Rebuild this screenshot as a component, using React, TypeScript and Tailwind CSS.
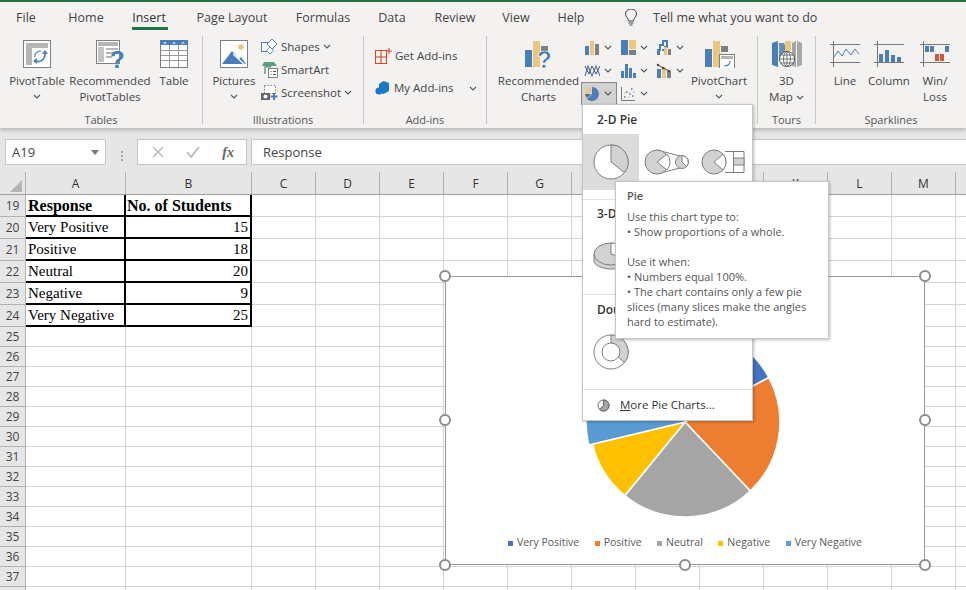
import type { ReactNode } from 'react'

const ui = "font-['Open_Sans',sans-serif]"
const BLUE = '#4a7ebb'
const TAN = '#eac67e'
const GRAY = '#7f7f7f'

const tabs = [
  { name: 'File', w: 'w-[52px]' },
  { name: 'Home', w: 'w-[68px]' },
  { name: 'Insert', w: 'w-[58px]', active: true },
  { name: 'Page Layout', w: 'w-[108px]' },
  { name: 'Formulas', w: 'w-[74px]' },
  { name: 'Data', w: 'w-[64px]' },
  { name: 'Review', w: 'w-[62px]' },
  { name: 'View', w: 'w-[60px]' },
  { name: 'Help', w: 'w-[50px]' },
]

const columns = [
  { name: 'A', w: 'w-[100px]' },
  { name: 'B', w: 'w-[126px]' },
  { name: 'C', w: 'w-[64px]' },
  { name: 'D', w: 'w-[64px]' },
  { name: 'E', w: 'w-[64px]' },
  { name: 'F', w: 'w-[64px]' },
  { name: 'G', w: 'w-[64px]' },
  { name: 'H', w: 'w-[64px]' },
  { name: 'I', w: 'w-[64px]' },
  { name: 'J', w: 'w-[64px]' },
  { name: 'K', w: 'w-[64px]' },
  { name: 'L', w: 'w-[64px]' },
  { name: 'M', w: 'w-[64px]' },
  { name: 'N', w: 'w-[64px]' },
]

const students = [
  { label: 'Very Positive', value: 15, color: '#4472c4', r: 95 },
  { label: 'Positive', value: 18, color: '#ed7d31', r: 95 },
  { label: 'Neutral', value: 20, color: '#a5a5a5', r: 95 },
  { label: 'Negative', value: 9, color: '#ffc000', r: 95 },
  { label: 'Very Negative', value: 25, color: '#5b9bd5', r: 99 },
]

const emptyRows = Array.from({ length: 14 }, (_, i) => 25 + i)

function Chevron({ className = '' }: { className?: string }) {
  return (
    <svg width="8" height="5" viewBox="0 0 8 5" className={className}>
      <path d="M1 1l3 3 3-3" fill="none" stroke="#555" strokeWidth="1.1" />
    </svg>
  )
}

function Icon({ children, w = 32, h = 28 }: { children: ReactNode; w?: number; h?: number }) {
  return (
    <svg width={w} height={h} viewBox={`0 0 ${w} ${h}`} className="shrink-0">
      {children}
    </svg>
  )
}

function PivotTableIcon() {
  return (
    <Icon>
      <rect x="2.5" y="0.5" width="27" height="27" fill="#fff" stroke={GRAY} />
      <rect x="5" y="3" width="22" height="5" fill="#b5b5b5" />
      <rect x="5" y="8" width="6" height="17" fill="#b5b5b5" />
      <path d="M14 21c5 2 10-1 10-8" fill="none" stroke={BLUE} strokeWidth="1.6" />
      <path d="M21 14l3-4 3 4zM16 18l-4 3 4 3z" fill={BLUE} />
      <path d="M14 17c-1-3 2-6 6-6" fill="none" stroke={BLUE} strokeWidth="1.2" />
    </Icon>
  )
}

function RecommendedTablesIcon() {
  return (
    <Icon w={32}>
      <rect x="2.5" y="0.5" width="23" height="23" fill="#fff" stroke={GRAY} />
      <rect x="4" y="2" width="20" height="4" fill="#b5b5b5" />
      <rect x="4" y="7" width="6" height="15" fill="#c4c4c4" />
      <path d="M12 9h12M12 13h8M12 17h6" stroke="#b5b5b5" strokeWidth="2" />
      <text x="16" y="28" fontSize="24" fontWeight="800" fill={BLUE} fontFamily="'Liberation Sans',sans-serif">?</text>
    </Icon>
  )
}

function TableIcon() {
  return (
    <Icon>
      <rect x="2.5" y="0.5" width="27" height="27" fill="#fff" stroke={GRAY} />
      <rect x="2" y="0" width="28" height="5" fill={BLUE} />
      <path d="M7 2l2 1.6h-4zM16 2l2 1.6h-4zM25 2l2 1.6h-4z" fill="#fff" />
      <path d="M3 10.5h26M3 15.5h26M3 20.5h26M11.5 5v22M20.5 5v22" stroke="#9a9a9a" />
    </Icon>
  )
}

function PicturesIcon() {
  return (
    <Icon>
      <rect x="2.5" y="0.5" width="27" height="27" fill="#fff" stroke={GRAY} />
      <circle cx="23" cy="7" r="2.8" fill={TAN} />
      <path d="M4 24l10-13 7 8 2-2 5 7z" fill={BLUE} />
      <path d="M15 14l12 11" stroke="#fff" strokeWidth="1.2" />
    </Icon>
  )
}

function ShapesIcon() {
  return (
    <svg width="17" height="17" viewBox="0 0 17 17">
      <rect x="0.5" y="4.5" width="9" height="9" fill="#fff" stroke={BLUE} />
      <path d="M11 1l5 5-5 5-5-5z" fill="#fff" stroke={BLUE} />
      <path d="M9 9l3.5 3.5L9 16l-3.5-3.5z" fill="#fff" stroke="#6b8fb8" />
    </svg>
  )
}

function SmartArtIcon() {
  return (
    <svg width="17" height="17" viewBox="0 0 17 17">
      <path d="M1 5l2-4h10l3 4z" fill="#5f9e85" />
      <rect x="5" y="2.5" width="5" height="4" fill="#5f9e85" />
      <path d="M4 5v7h-1" stroke="#5f9e85" strokeWidth="1.4" fill="none" />
      <rect x="7.5" y="7.5" width="9" height="9" fill="#fff" stroke={GRAY} />
      <path d="M9.5 10.5h1M12 10.5h3M9.5 13.5h1M12 13.5h3" stroke="#555" />
    </svg>
  )
}

function ScreenshotIcon() {
  return (
    <svg width="17" height="17" viewBox="0 0 17 17">
      <rect x="3.5" y="1.5" width="11" height="8" fill="#fff" stroke={GRAY} strokeDasharray="1.5 1.5" />
      <rect x="0" y="9" width="9" height="7" fill="#666" />
      <circle cx="4.5" cy="12.5" r="2" fill="#fff" />
      <path d="M13 9v7M9.5 12.5h7" stroke={BLUE} strokeWidth="2" />
    </svg>
  )
}

function GetAddinsIcon() {
  return (
    <svg width="17" height="17" viewBox="0 0 17 17">
      <path d="M0.5 2.5h11v13h-11zM0.5 9h11M6 2.5v13" fill="none" stroke="#d24726" strokeWidth="1.1" />
      <path d="M14 0v6M11 3h6" stroke="#d24726" strokeWidth="1.1" />
    </svg>
  )
}

function MyAddinsIcon() {
  return (
    <svg width="16" height="16" viewBox="0 0 16 16">
      <path d="M8.5 1l5.5 2v8l-5.5 3L4 12V4z" fill="#1a78c8" />
      <circle cx="4" cy="11" r="3.6" fill="#1a78c8" />
    </svg>
  )
}

function RecommendedChartsIcon() {
  return (
    <Icon>
      <rect x="2" y="10" width="7" height="17" fill={BLUE} />
      <rect x="10" y="1" width="7" height="26" fill={TAN} />
      <rect x="18" y="6" width="7" height="5" fill={GRAY} />
      <text x="14" y="28" fontSize="24" fontWeight="800" fill="#3f6fa8" fontFamily="'Liberation Sans',sans-serif" stroke="#fff" strokeWidth="0.6">?</text>
    </Icon>
  )
}

function PivotChartIcon() {
  return (
    <Icon>
      <rect x="2" y="9" width="7" height="18" fill={BLUE} />
      <rect x="10" y="1" width="7" height="26" fill={TAN} />
      <rect x="18" y="6" width="7" height="6" fill={GRAY} />
      <rect x="16.5" y="14.5" width="15" height="14" fill="#fff" stroke={GRAY} />
      <rect x="18" y="16" width="12" height="3" fill="#b5b5b5" />
      <path d="M21 26c4 0 6-2 6-5" fill="none" stroke={BLUE} strokeWidth="1.2" />
    </Icon>
  )
}

function MapIcon() {
  return (
    <Icon>
      <path d="M1 3l6-2v26l-6-2z" fill={BLUE} />
      <path d="M8 3h5l1 2v14h-6z" fill={BLUE} opacity="0.85" />
      <path d="M14 1h6v10h-6z" fill={TAN} />
      <path d="M21 3l4-2v26l-4-1z" fill="#a6a6a6" />
      <path d="M26 1l5 2v22l-5 2z" fill="#a6a6a6" />
      <circle cx="16" cy="19" r="7.5" fill="#fff" stroke="#555" />
      <path d="M8.5 19h15M16 11.5v15M10 15h12M10 23h12" stroke="#555" strokeWidth="0.8" />
      <ellipse cx="16" cy="19" rx="3.5" ry="7.5" fill="none" stroke="#555" strokeWidth="0.8" />
    </Icon>
  )
}

function SparkFrame({ children }: { children: ReactNode }) {
  return (
    <Icon>
      <path d="M1 4.5h30M1 22.5h30M4.5 1v26" stroke="#777" fill="none" />
      {children}
    </Icon>
  )
}

function MiniChart({ kind }: { kind: number }) {
  const shapes = [
    <>
      <rect x="1" y="6" width="4" height="9" fill={BLUE} />
      <rect x="6" y="1" width="4" height="14" fill={TAN} />
      <rect x="11" y="4" width="4" height="11" fill={GRAY} />
    </>,
    <>
      <rect x="1" y="0" width="7" height="15" fill={BLUE} />
      <rect x="9" y="0" width="7" height="9" fill={TAN} />
      <rect x="9" y="10" width="7" height="5" fill={GRAY} />
    </>,
    <>
      <path d="M1 10h3V5h3V1h4v6h-2v3H6" fill="none" stroke={BLUE} strokeWidth="2" />
      <rect x="1" y="10" width="3" height="5" fill={BLUE} />
      <rect x="8" y="7" width="3" height="8" fill={TAN} />
      <rect x="12" y="9" width="3" height="6" fill={GRAY} />
    </>,
    <>
      <path d="M1 13L4 3l4 10 4-10 4 10" fill="none" stroke={BLUE} strokeWidth="1.2" />
      <path d="M1 3l4 8 3-8 4 8 4-8" fill="none" stroke="#555" strokeWidth="1" />
    </>,
    <>
      <rect x="1" y="8" width="3" height="7" fill={BLUE} />
      <rect x="5" y="1" width="3" height="14" fill={BLUE} />
      <rect x="9" y="5" width="3" height="10" fill={BLUE} />
      <rect x="13" y="10" width="3" height="5" fill={BLUE} />
    </>,
    <>
      <rect x="1" y="6" width="4" height="9" fill={BLUE} />
      <rect x="6" y="4" width="4" height="11" fill={TAN} />
      <rect x="11" y="8" width="4" height="7" fill={GRAY} />
      <path d="M2 2l5 3 6 3" fill="none" stroke="#444" strokeWidth="1" />
      <circle cx="2" cy="2" r="1.2" fill="#444" />
      <circle cx="7" cy="5" r="1.2" fill="#444" />
      <circle cx="13" cy="8" r="1.2" fill="#444" />
    </>,
    <>
      <path d="M8 8V1a7 7 0 1 1-5 12z" fill={BLUE} />
      <path d="M7 7V1a7 7 0 0 0-6 6z" fill={TAN} />
      <path d="M7 8H1a7 7 0 0 0 2 4z" fill="#666" />
    </>,
    <>
      <path d="M1.5 1v13.5H15" fill="none" stroke="#777" />
      <path d="M4 11h1.5M6 6h1.5M9 8h1.5M11 3h1.5M12 10h1.5" stroke={BLUE} strokeWidth="1.3" />
      <path d="M4 7h1.5M8 11h1.5M13 6h1.5" stroke={TAN} strokeWidth="1.3" />
    </>,
  ]
  return (
    <svg width="16" height="16" viewBox="0 0 16 16" className="shrink-0">
      {shapes[kind]}
    </svg>
  )
}

function LargeButton({ width, icon, lines, chevron }: { width: string; icon: ReactNode; lines: string[]; chevron?: boolean }) {
  return (
    <div className={`${width} flex shrink-0 flex-col items-center pt-[4px] text-[11.5px] leading-[16px] text-[#444]`}>
      <div className="flex h-[28px] items-center justify-center">{icon}</div>
      <div className="mt-[5px] flex flex-col items-center whitespace-nowrap">
        {lines.map((line) => (
          <span key={line}>{line}</span>
        ))}
        {chevron && <Chevron className="mt-[5px]" />}
      </div>
    </div>
  )
}

function SmallButton({ icon, label, chevron }: { icon: ReactNode; label: string; chevron?: boolean }) {
  return (
    <div className="flex h-[23px] items-center gap-[3px] whitespace-nowrap text-[11.5px] text-[#444]">
      {icon}
      <span>{label}</span>
      {chevron && <Chevron />}
    </div>
  )
}

function MiniButton({ kind, active }: { kind: number; active?: boolean }) {
  return (
    <div
      className={
        active
          ? 'flex h-[23px] w-[36px] items-center gap-[4px] border border-[#8a8a8a] bg-[#d2d2d2] pl-[2px]'
          : 'flex h-[23px] w-[36px] items-center gap-[4px] border border-transparent pl-[2px]'
      }
    >
      <MiniChart kind={kind} />
      <Chevron />
    </div>
  )
}

function RibbonGroup({ width, label, children, last }: { width: string; label: string; children: ReactNode; last?: boolean }) {
  return (
    <div className={`${width} flex h-[88px] shrink-0 flex-col ${last ? '' : 'border-r border-[#c6c6c6]'}`}>
      <div className="flex h-[77px] shrink-0">{children}</div>
      <div className="h-[14px] shrink-0 text-center text-[11px] leading-[14px] text-[#555]">{label}</div>
    </div>
  )
}

function Ribbon() {
  return (
    <div className={`${ui} relative z-10 bg-[#f3f2f1] shadow-[0_2px_4px_rgba(0,0,0,0.22)]`}>
      <div className="h-[2px] bg-[#217346]" />
      <div className="flex h-[28px] items-center text-[12.5px] text-[#444]">
        {tabs.map((tab) => (
          <div key={tab.name} className={`${tab.w} relative flex h-full shrink-0 items-center justify-center pt-[4px]`}>
            <span className={tab.active ? 'text-[#333]' : ''}>{tab.name}</span>
            {tab.active && <div className="absolute bottom-0 left-[12px] h-[3px] w-[36px] bg-[#217346]" />}
          </div>
        ))}
        <div className="ml-[27px] flex items-center gap-[14px] pt-[4px]">
          <svg width="16" height="18" viewBox="0 0 16 18">
            <path d="M5.5 12c0-3-3-4-3-7a5.5 5 0 0 1 11 0c0 3-3 4-3 7z" fill="none" stroke="#444" />
            <path d="M5.5 14h5M6.5 16h3" stroke="#444" />
          </svg>
          <span className="whitespace-nowrap">Tell me what you want to do</span>
        </div>
      </div>
      <div className="flex h-[98px] pt-[6px]">
        <RibbonGroup width="w-[203px]" label="Tables">
          <div className="flex pl-[6px]">
            <LargeButton width="w-[62px]" icon={<PivotTableIcon />} lines={['PivotTable']} chevron />
            <LargeButton width="w-[84px]" icon={<RecommendedTablesIcon />} lines={['Recommended', 'PivotTables']} />
            <LargeButton width="w-[44px]" icon={<TableIcon />} lines={['Table']} />
          </div>
        </RibbonGroup>
        <RibbonGroup width="w-[161px]" label="Illustrations">
          <div className="flex pl-[9px]">
            <LargeButton width="w-[44px]" icon={<PicturesIcon />} lines={['Pictures']} chevron />
            <div className="ml-[5px] -mt-[1px] flex flex-col">
              <SmallButton icon={<ShapesIcon />} label="Shapes" chevron />
              <SmallButton icon={<SmartArtIcon />} label="SmartArt" />
              <SmallButton icon={<ScreenshotIcon />} label="Screenshot" chevron />
            </div>
          </div>
        </RibbonGroup>
        <RibbonGroup width="w-[123px]" label="Add-ins">
          <div className="flex flex-col pl-[11px] pt-[4px] text-[11.5px] text-[#444]">
            <div className="flex h-[32px] items-center gap-[3px]">
              <GetAddinsIcon />
              <span className="whitespace-nowrap">Get Add-ins</span>
            </div>
            <div className="flex h-[32px] items-center gap-[3px]">
              <MyAddinsIcon />
              <span className="whitespace-nowrap">My Add-ins</span>
              <Chevron className="ml-[12px]" />
            </div>
          </div>
        </RibbonGroup>
        <RibbonGroup width="w-[271px]" label="Charts">
          <div className="flex pl-[9px]">
            <LargeButton width="w-[85px]" icon={<RecommendedChartsIcon />} lines={['Recommended', 'Charts']} />
            <div className="grid h-[69px] w-[108px] grid-cols-3">
              {[0, 1, 2, 3, 4, 5, 6, 7].map((kind) => (
                <MiniButton key={kind} kind={kind} active={kind === 6} />
              ))}
            </div>
            <LargeButton width="w-[60px]" icon={<PivotChartIcon />} lines={['PivotChart']} chevron />
          </div>
        </RibbonGroup>
        <RibbonGroup width="w-[58px]" label="Tours">
          <div className="flex w-full justify-center">
            <div className="flex flex-col items-center pt-[4px] text-[11.5px] leading-[16px] text-[#444]">
              <MapIcon />
              <span className="mt-[5px]">3D</span>
              <span className="flex items-center gap-[3px]">
                Map <Chevron />
              </span>
            </div>
          </div>
        </RibbonGroup>
        <RibbonGroup width="w-[150px]" label="Sparklines" last>
          <div className="flex pl-[7px]">
            <LargeButton
              width="w-[44px]"
              lines={['Line']}
              icon={
                <SparkFrame>
                  <path d="M5 17l4-6 4 5 4-7 5 6 4-6 4 5" fill="none" stroke={BLUE} />
                </SparkFrame>
              }
            />
            <LargeButton
              width="w-[44px]"
              lines={['Column']}
              icon={
                <SparkFrame>
                  <path d="M6 14h4v8H6zM12 10h4v12h-4zM18 15h4v7h-4zM24 17h4v5h-4z" fill={BLUE} />
                </SparkFrame>
              }
            />
            <LargeButton
              width="w-[48px]"
              lines={['Win/', 'Loss']}
              icon={
                <SparkFrame>
                  <path d="M6 6h4v6H6zM11 6h4v6h-4zM26 6h4v6h-4z" fill={BLUE} />
                  <path d="M16 14h4v7h-4zM21 14h4v7h-4z" fill="#d2553a" />
                </SparkFrame>
              }
            />
          </div>
        </RibbonGroup>
      </div>
    </div>
  )
}

function FormulaBar() {
  return (
    <div className={`${ui} flex h-[44px] bg-[#e6e6e6] pl-[5px] pt-[11px] text-[13px] text-[#444]`}>
      <div className="flex h-[26px] w-[101px] items-center justify-between border border-[#c6c6c6] bg-white pl-[6px] pr-[6px] pt-[1px]">
        <span>A19</span>
        <svg width="8" height="5" viewBox="0 0 8 5">
          <path d="M0 0h8L4 5z" fill="#777" />
        </svg>
      </div>
      <div className="flex w-[31px] flex-col items-center justify-center gap-[2px]">
        <div className="h-[2px] w-[2px] bg-[#aaa]" />
        <div className="h-[2px] w-[2px] bg-[#aaa]" />
        <div className="h-[2px] w-[2px] bg-[#aaa]" />
      </div>
      <div className="flex h-[26px] w-[110px] items-center justify-around border border-[#c6c6c6] bg-white pl-[3px] pr-[1px]">
        <svg width="12" height="12" viewBox="0 0 12 12">
          <path d="M1 1l10 10M11 1L1 11" stroke="#bbb" strokeWidth="1.6" />
        </svg>
        <svg width="14" height="12" viewBox="0 0 14 12">
          <path d="M1 6l4 5 8-10" fill="none" stroke="#bbb" strokeWidth="1.8" />
        </svg>
        <span className="font-['Liberation_Serif',serif] text-[14px] font-bold italic text-[#666]">fx</span>
      </div>
      <div className="ml-[4px] flex h-[26px] flex-1 items-center border border-r-0 border-[#c6c6c6] bg-white pl-[11px] pt-[1px]">Response</div>
    </div>
  )
}

function Sheet() {
  const cell = 'h-full shrink-0 border-r border-b border-[#d4d4d4]'
  const blank = columns.slice(2)
  const rowHead = 'flex h-full w-[26px] shrink-0 items-center justify-center border-r border-b border-[#b1b1b1] bg-[#e6e6e6] pt-[1px] text-[12px] text-[#444]'
  return (
    <div className="bg-white">
      <div className={`${ui} flex h-[23px] border-b border-[#9f9f9f] bg-[#e6e6e6] text-[12px] text-[#333]`}>
        <div className="flex w-[26px] shrink-0 items-end justify-end border-r border-[#b1b1b1] pb-[2px] pr-[3px]">
          <svg width="12" height="12" viewBox="0 0 12 12">
            <path d="M12 0v12H0z" fill="#b4b4b4" />
          </svg>
        </div>
        {columns.map((col) => (
          <div key={col.name} className={`${col.w} flex shrink-0 items-center justify-center border-r border-[#b1b1b1] pt-[1px]`}>
            {col.name}
          </div>
        ))}
      </div>

      <div className="flex h-[22px] font-['Liberation_Serif',serif] text-[16px] text-black">
        <div className={`${ui} ${rowHead}`}>19</div>
        <div className="flex h-full w-[100px] shrink-0 items-center border-r-2 border-b-2 border-black pl-[2px] pt-[1px] font-bold">Response</div>
        <div className="flex h-full w-[126px] shrink-0 items-center whitespace-nowrap border-r-2 border-b-2 border-black pl-[1px] pt-[1px] font-bold">No. of Students</div>
        {blank.map((col) => (
          <div key={col.name} className={`${col.w} ${cell}`} />
        ))}
      </div>
      {students.map((row, i) => (
        <div key={row.label} className="flex h-[22px] font-['Liberation_Serif',serif] text-[15px] text-black">
          <div className={`${ui} ${rowHead}`}>{20 + i}</div>
          <div className="flex h-full w-[100px] shrink-0 items-center border-r-2 border-b-2 border-black pl-[2px] pt-[1px]">{row.label}</div>
          <div className="flex h-full w-[126px] shrink-0 items-center justify-end border-r-2 border-b-2 border-black pr-[2px] pt-[1px]">{row.value}</div>
          {blank.map((col) => (
            <div key={col.name} className={`${col.w} ${cell}`} />
          ))}
        </div>
      ))}
      {emptyRows.map((n) => (
        <div key={n} className="flex h-[20px]">
          <div className={`${ui} ${rowHead}`}>{n}</div>
          {columns.map((col) => (
            <div key={col.name} className={`${col.w} ${cell}`} />
          ))}
        </div>
      ))}
    </div>
  )
}

function piePaths() {
  const total = students.reduce((sum, s) => sum + s.value, 0)
  let angle = 0
  return students.map((s) => {
    const start = angle
    angle += (s.value / total) * Math.PI * 2
    const x1 = 100 + s.r * Math.sin(start)
    const y1 = 100 - s.r * Math.cos(start)
    const x2 = 100 + s.r * Math.sin(angle)
    const y2 = 100 - s.r * Math.cos(angle)
    const large = angle - start > Math.PI ? 1 : 0
    return { color: s.color, d: `M100 100L${x1} ${y1}A${s.r} ${s.r} 0 ${large} 1 ${x2} ${y2}Z` }
  })
}

function Handle({ className }: { className: string }) {
  return <div className={`absolute h-[12px] w-[12px] rounded-full border-2 border-[#8c8c8c] bg-white ${className}`} />
}

function PieChart() {
  return (
    <div className={`${ui} absolute left-[445px] top-[276px] h-[289px] w-[480px] border border-[#979797] bg-white`}>
      <div className="flex flex-col items-center pt-[45px]">
        <svg width="200" height="200" viewBox="0 0 200 200">
          {piePaths().map((p) => (
            <path key={p.color} d={p.d} fill={p.color} stroke="#fff" strokeWidth="1.6" />
          ))}
        </svg>
        <div className="mt-[14px] flex h-[14px] items-center gap-[15.5px] text-[10.5px] text-[#595959]">
          {students.map((s) => (
            <div key={s.label} className="flex items-center gap-[4px] whitespace-nowrap">
              <div className="h-[5px] w-[5px]" style={{ backgroundColor: s.color }} />
              <span>{s.label}</span>
            </div>
          ))}
        </div>
      </div>
      <Handle className="-left-[7px] -top-[7px]" />
      <Handle className="left-[233px] -top-[7px]" />
      <Handle className="-right-[7px] -top-[7px]" />
      <Handle className="-left-[7px] top-[137px]" />
      <Handle className="-right-[7px] top-[137px]" />
      <Handle className="-left-[7px] -bottom-[7px]" />
      <Handle className="left-[233px] -bottom-[7px]" />
      <Handle className="-right-[7px] -bottom-[7px]" />
    </div>
  )
}

const wedge = { fill: '#d2d2d2', stroke: '#7f7f7f' }

function PieMenu() {
  return (
    <div className={`${ui} absolute left-[582px] top-[104px] z-20 h-[317px] w-[171px] border border-[#c6c6c6] bg-white shadow-[1px_1px_3px_rgba(0,0,0,0.25)]`}>
      <div className="flex h-[29px] items-center pl-[14px] text-[12px] font-semibold text-[#333]">2-D Pie</div>
      <div className="flex h-[56px]">
        <div className="flex w-[56px] items-center justify-center bg-[#dcdcdb]">
          <svg width="36" height="36" viewBox="0 0 36 36">
            <circle cx="18" cy="18" r="17" fill="#fff" stroke={GRAY} />
            <path d="M18 18V1a17 17 0 0 1 13.5 27.5z" {...wedge} />
          </svg>
        </div>
        <div className="flex w-[56px] items-center justify-center">
          <svg width="46" height="26" viewBox="0 0 46 26">
            <path d="M13 1l23 6M13 25l23-6" stroke={GRAY} />
            <circle cx="13" cy="13" r="12" {...wedge} />
            <path d="M13 13l10-8a12 12 0 0 1 0 16z" fill="#fff" stroke={GRAY} />
            <circle cx="38" cy="13" r="6.5" {...wedge} />
            <path d="M38 13V6.5a6.5 6.5 0 0 1 4.5 11z" fill="#fff" stroke={GRAY} />
          </svg>
        </div>
        <div className="flex w-[56px] items-center justify-center">
          <svg width="44" height="26" viewBox="0 0 44 26">
            <path d="M24 2.5h19v21H24" fill="#fff" stroke={GRAY} />
            <path d="M32.5 2.5v21" stroke={GRAY} />
            <rect x="32.5" y="9" width="10.5" height="7" fill="#d2d2d2" stroke={GRAY} />
            <circle cx="13" cy="13" r="12" {...wedge} />
            <path d="M13 13l9-8a12 12 0 0 1 0 16z" fill="#fff" stroke={GRAY} />
          </svg>
        </div>
      </div>
      <div className="h-[10px] border-b border-[#e1e1e1]" />
      <div className="flex h-[28px] items-center pl-[14px] text-[12px] font-semibold text-[#333]">3-D Pie</div>
      <div className="flex h-[56px]">
        <div className="flex w-[56px] items-center justify-center">
          <svg width="36" height="30" viewBox="0 0 36 30">
            <path d="M1 13v7c0 4 8 8 17 8s17-4 17-8v-7" fill="#d2d2d2" stroke={GRAY} />
            <ellipse cx="18" cy="13" rx="17" ry="11" {...wedge} />
            <path d="M18 13V2a17 11 0 0 1 15 16z" fill="#fff" stroke={GRAY} />
          </svg>
        </div>
      </div>
      <div className="h-[11px] border-b border-[#e1e1e1]" />
      <div className="flex h-[29px] items-center pl-[14px] text-[12px] font-semibold text-[#333]">Doughnut</div>
      <div className="flex h-[56px]">
        <div className="flex w-[56px] items-center justify-center">
          <svg width="36" height="36" viewBox="0 0 36 36">
            <circle cx="18" cy="18" r="17" fill="#fff" stroke={GRAY} />
            <path d="M18 1a17 17 0 0 1 13.5 27.5l-6.5-5.5a9 9 0 0 0-7-14z" {...wedge} />
            <circle cx="18" cy="18" r="9" fill="#fff" stroke={GRAY} />
          </svg>
        </div>
      </div>
      <div className="h-[10px] border-b border-[#e1e1e1]" />
      <div className="flex h-[30px] items-center gap-[10px] pl-[14px] text-[11.5px] text-[#333]">
        <svg width="13" height="13" viewBox="0 0 13 13">
          <circle cx="6.5" cy="6.5" r="5.5" fill="#fff" stroke="#666" />
          <path d="M6.5 6.5V1a5.5 5.5 0 1 1-4 9.3z" fill="#a6a6a6" stroke="#666" />
        </svg>
        <span>
          <span className="underline">M</span>ore Pie Charts...
        </span>
      </div>
    </div>
  )
}

const tooltipLines = [
  'Use this chart type to:',
  '• Show proportions of a whole.',
  '\u00a0',
  'Use it when:',
  '• Numbers equal 100%.',
  '• The chart contains only a few pie',
  'slices (many slices make the angles',
  'hard to estimate).',
]

function Tooltip() {
  return (
    <div className={`${ui} absolute left-[615px] top-[181px] z-30 h-[158px] w-[214px] border border-[#c6c6c6] bg-white px-[11px] pt-[6px] text-[11px] leading-[15px] text-[#555] shadow-[1px_1px_3px_rgba(0,0,0,0.25)]`}>
      <div className="mb-[6px] font-semibold">Pie</div>
      {tooltipLines.map((line, i) => (
        <div key={i} className="whitespace-nowrap">
          {line}
        </div>
      ))}
    </div>
  )
}

export default function App() {
  return (
    <div className="relative h-[590px] w-[966px] overflow-hidden bg-white">
      <Ribbon />
      <FormulaBar />
      <Sheet />
      <PieChart />
      <PieMenu />
      <Tooltip />
    </div>
  )
}
